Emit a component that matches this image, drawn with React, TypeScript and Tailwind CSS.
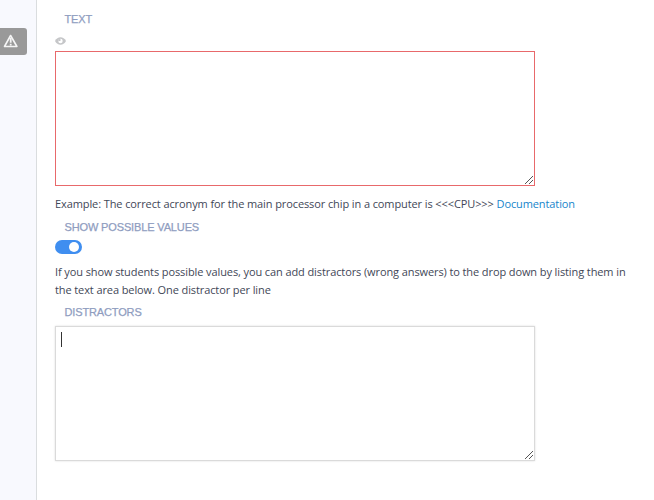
import React from "react";

const label = "pl-[9.5px] font-['Liberation_Sans',sans-serif] text-[11px] leading-[14px] tracking-[-0.14px] text-[#8f9dbf] [-webkit-text-stroke:0.25px_#8f9dbf]";
const copy = "whitespace-nowrap font-['Open_Sans',sans-serif] text-[11px] leading-[18px] tracking-[-0.1px] text-[#3f4757]";

function Grip() {
  return (
    <svg className="absolute right-0 bottom-0" width="9" height="9" viewBox="0 0 9 9" shapeRendering="crispEdges" fill="#555">
      {[0, 1, 2, 3, 4, 5, 6, 7].map((i) => (
        <rect key={i} x={i} y={7 - i} width="1" height="1" />
      ))}
      {[0, 1, 2, 3].map((i) => (
        <rect key={i} x={4 + i} y={7 - i} width="1" height="1" />
      ))}
    </svg>
  );
}

function Area({ className, caret }: { className: string; caret?: boolean }) {
  return (
    <div className={"relative h-[135px] w-[480px] border " + className}>
      <textarea className="block h-full w-full resize-none bg-transparent p-[6px] outline-none" />
      {caret && <span className="absolute top-[5px] left-[5px] h-[15px] w-px bg-[#333]" />}
      <Grip />
    </div>
  );
}

export default function App() {
  return (
    <div className="flex h-[500px] w-[654px] overflow-hidden bg-white">
      <aside className="w-[37px] shrink-0 border-r border-[#dadddf] bg-[#f8f9fe] pt-[28px]">
        <div className="flex h-[27px] w-[27px] items-center rounded-r-[3px] bg-[#999] pb-px pl-[3px]">
          <svg width="16" height="14" viewBox="0 0 16 14" fill="none" stroke="#f5f5f5">
            <path d="M7.6 1.5 1.5 12.5h12.4z" strokeWidth="1.6" strokeLinejoin="round" />
            <path d="M7.7 4v4.8M7.7 9.8v1.7" strokeWidth="1.8" />
          </svg>
        </div>
      </aside>
      <main className="w-[617px] pl-[18px] pt-[12px]">
        <div className={label}>TEXT</div>
        <div className="flex h-[25px] items-center pt-[4px]">
          <svg width="11" height="8" viewBox="0 0 11 8">
            <path d="M0 4C1.4 1.4 3.2.2 5.5.2S9.6 1.4 11 4C9.6 6.600 7.800 7.800 5.500 7.800S1.400 6.600 0 4z" fill="#c5c6c8" />
            <circle cx="5.5" cy="4" r="2.200" fill="#fff" />
            <path d="M5.500 4V1.800A2.200 2.200 0 0 0 3.300 4z" fill="#c5c6c8" />
          </svg>
        </div>
        <Area className="border-[#e8696b]" />
        <p className={copy + " mt-[9px]"}>
          Example: The correct acronym for the main processor chip in a computer is &lt;&lt;&lt;CPU&gt;&gt;&gt;{" "}
          <a className="text-[#1685cb]">Documentation</a>
        </p>
        <div className={label + " mt-[7px]"}>SHOW POSSIBLE VALUES</div>
        <div className="mt-[6px] flex h-[14px] w-[27px] items-center justify-end rounded-full bg-[#3f8ef0] pr-[3px]">
          <span className="h-[10px] w-[10px] rounded-full bg-white" />
        </div>
        <p className={copy + " mt-[9px]"}>
          If you show students possible values, you can add distractors (wrong answers) to the drop down by listing them in
          <br />
          the text area below. One distractor per line
        </p>
        <div className={label + " mt-[6px]"}>DISTRACTORS</div>
        <div className="pt-[7px]">
          <Area className="border-[#dadada] shadow-[0_0_2px_#ddd]" caret />
        </div>
      </main>
    </div>
  );
}
